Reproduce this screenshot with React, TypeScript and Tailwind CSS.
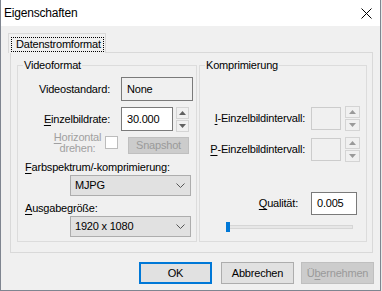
import React from "react";

const Tri = ({ up, color }: { up?: boolean; color: string }) => (
  <svg width="7" height="4" viewBox="0 0 7 4">
    {up ? <polygon points="0,4 7,4 3.5,0" fill={color} /> : <polygon points="0,0 7,0 3.5,4" fill={color} />}
  </svg>
);

const Spin = ({ disabled, w }: { disabled?: boolean; w: string }) => {
  const c = disabled ? "#9a9a9a" : "#606060";
  return (
    <div className={`flex flex-col gap-[1px] ${w}`}>
      <div className="h-[12px] border border-[#d4d4d4] bg-[#f0f0f0] flex items-center justify-center">
        <Tri up color={c} />
      </div>
      <div className="h-[12px] border border-[#d4d4d4] bg-[#f0f0f0] flex items-center justify-center">
        <Tri color={c} />
      </div>
    </div>
  );
};

const U = ({ children }: { children: React.ReactNode }) => (
  <span className="underline decoration-1 underline-offset-[2px]">{children}</span>
);

const Chevron = () => (
  <svg width="9" height="5" viewBox="0 0 9 5" className="mr-[5px]">
    <polyline points="0.5,0.5 4.5,4.5 8.5,0.5" fill="none" stroke="#555" strokeWidth="1" />
  </svg>
);

const Combo = ({ value }: { value: string }) => (
  <div className="ml-[52px] w-[121px] h-[21px] border border-[#adadad] bg-[#e1e1e1] flex items-center justify-between">
    <span className="pl-[4px]">{value}</span>
    <Chevron />
  </div>
);

export default function App() {
  return (
    <div className="w-[382px] h-[291px] bg-[#e8e8e8] font-['Liberation_Sans',Arial,sans-serif] text-[11px] leading-[13px] tracking-[-0.2px] text-black">
      <div className="w-[381px] h-[291px] border-l border-r border-b border-[#7f8590] flex flex-col">
        {/* title bar */}
        <div className="h-[26px] bg-white flex items-center pl-[3px] shrink-0">
          <span className="text-[12px]">Eigenschaften</span>
          <svg width="11" height="11" viewBox="0 0 11 11" className="ml-auto mr-[8px]">
            <path d="M0.5 0.5 L10.5 10.5 M10.5 0.5 L0.5 10.5" stroke="#000" strokeWidth="1" />
          </svg>
        </div>
        {/* body */}
        <div className="flex-1 bg-[#f0f0f0] flex flex-col">
          {/* tab */}
          <div className="ml-[7px] mt-[7px] w-[98px] h-[20px] border-t border-l border-r border-[#d9d9d9] bg-[#f0f0f0] relative z-10 -mb-px">
            <div className="ml-[2px] mr-[1px] mt-[3px] h-[15px] border border-dotted border-black pl-[4px] flex items-center">
              Datenstromformat
            </div>
          </div>
          {/* panel */}
          <div className="ml-[9px] w-[363px] h-[201px] border border-[#d9d9d9] pt-[12px] pl-[6px]">
            <div className="flex gap-[2px]">
              {/* Videoformat */}
              <div className="relative w-[180px] h-[177px] border border-[#dcdcdc] flex flex-col">
                <span className="absolute top-[-7px] left-[5px] px-[1px] bg-[#f0f0f0]">Videoformat</span>
                <div className="mt-[11px] h-[24px] flex items-center">
                  <span className="w-[92px] text-right">Videostandard:</span>
                  <div className="ml-[11px] w-[72px] h-[24px] border border-[#7a7a7a] bg-[#f0f0f0] flex items-center pl-[5px]">
                    None
                  </div>
                </div>
                <div className="mt-[6px] h-[24px] flex items-center">
                  <span className="w-[92px] text-right">
                    <U>E</U>inzelbildrate:
                  </span>
                  <div className="ml-[11px] w-[52px] h-[24px] border border-[#7a7a7a] bg-white flex items-center pl-[5px]">
                    30.000
                  </div>
                  <div className="ml-[3px]">
                    <Spin w="w-[13px]" />
                  </div>
                </div>
                <div className="h-[23px] flex items-start">
                  <div className="ml-[32px] w-[55px] h-[23px] flex flex-col items-center justify-center leading-[11px] text-[#a0a0a0]">
                    <span>
                      <U>H</U>orizontal
                    </span>
                    <span>drehen:</span>
                  </div>
                  <div className="mt-[5px] w-[13px] h-[13px] border border-[#bcbcbc] bg-white" />
                  <div className="ml-[10px] mt-[6px] w-[61px] h-[17px] border border-[#bfbfbf] bg-[#cccccc] text-[#9a9a9a] flex items-center justify-center">
                    Snapshot
                  </div>
                </div>
                <div className="mt-[7px] ml-[7px] h-[13px]">
                  <U>F</U>arbspektrum/-komprimierung:
                </div>
                <div className="mt-[1px]">
                  <Combo value="MJPG" />
                </div>
                <div className="mt-[6px] ml-[7px] h-[13px]">
                  <U>A</U>usgabegröße:
                </div>
                <div className="mt-[1px]">
                  <Combo value="1920 x 1080" />
                </div>
              </div>
              {/* Komprimierung */}
              <div className="relative w-[168px] h-[177px] border border-[#dcdcdc] flex flex-col">
                <span className="absolute top-[-7px] left-[5px] px-[1px] bg-[#f0f0f0]">Komprimierung</span>
                <div className="mt-[41px] h-[23px] flex items-center">
                  <span className="w-[105px] text-right">
                    <U>I</U>-Einzelbildintervall:
                  </span>
                  <div className="ml-[6px] w-[30px] h-[23px] border border-[#cccccc] bg-[#f0f0f0]" />
                  <div className="ml-[4px]">
                    <Spin disabled w="w-[15px]" />
                  </div>
                </div>
                <div className="mt-[8px] h-[23px] flex items-center">
                  <span className="w-[105px] text-right">
                    <U>P</U>-Einzelbildintervall:
                  </span>
                  <div className="ml-[6px] w-[30px] h-[23px] border border-[#cccccc] bg-[#f0f0f0]" />
                  <div className="ml-[4px]">
                    <Spin disabled w="w-[15px]" />
                  </div>
                </div>
                <div className="mt-[31px] h-[23px] flex items-center">
                  <span className="w-[98px] text-right">
                    <U>Q</U>ualität:
                  </span>
                  <div className="ml-[13px] w-[46px] h-[23px] border border-[#7a7a7a] bg-white flex items-center pl-[5px]">
                    0.005
                  </div>
                </div>
                <div className="mt-[7px] ml-[26px] w-[127px] h-[10px] relative flex items-center">
                  <div className="w-full h-[4px] border border-[#d6d6d6] bg-[#e7e7e7]" />
                  <div className="absolute left-0 top-0 w-[4px] h-[10px] bg-[#0078d7]" />
                </div>
              </div>
            </div>
          </div>
          {/* buttons */}
          <div className="mt-[9px] ml-[138px] flex">
            <div className="w-[73px] h-[22px] border-2 border-[#0078d7] bg-[#e1e1e1] flex items-center justify-center">
              OK
            </div>
            <div className="ml-[9px] w-[73px] h-[22px] border border-[#adadad] bg-[#e1e1e1] flex items-center justify-center">
              Abbrechen
            </div>
            <div className="ml-[7px] w-[73px] h-[22px] border border-[#bfbfbf] bg-[#cccccc] text-[#9a9a9a] flex items-center justify-center">
              Ü<U>b</U>ernehmen
            </div>
          </div>
        </div>
      </div>
    </div>
  );
}
